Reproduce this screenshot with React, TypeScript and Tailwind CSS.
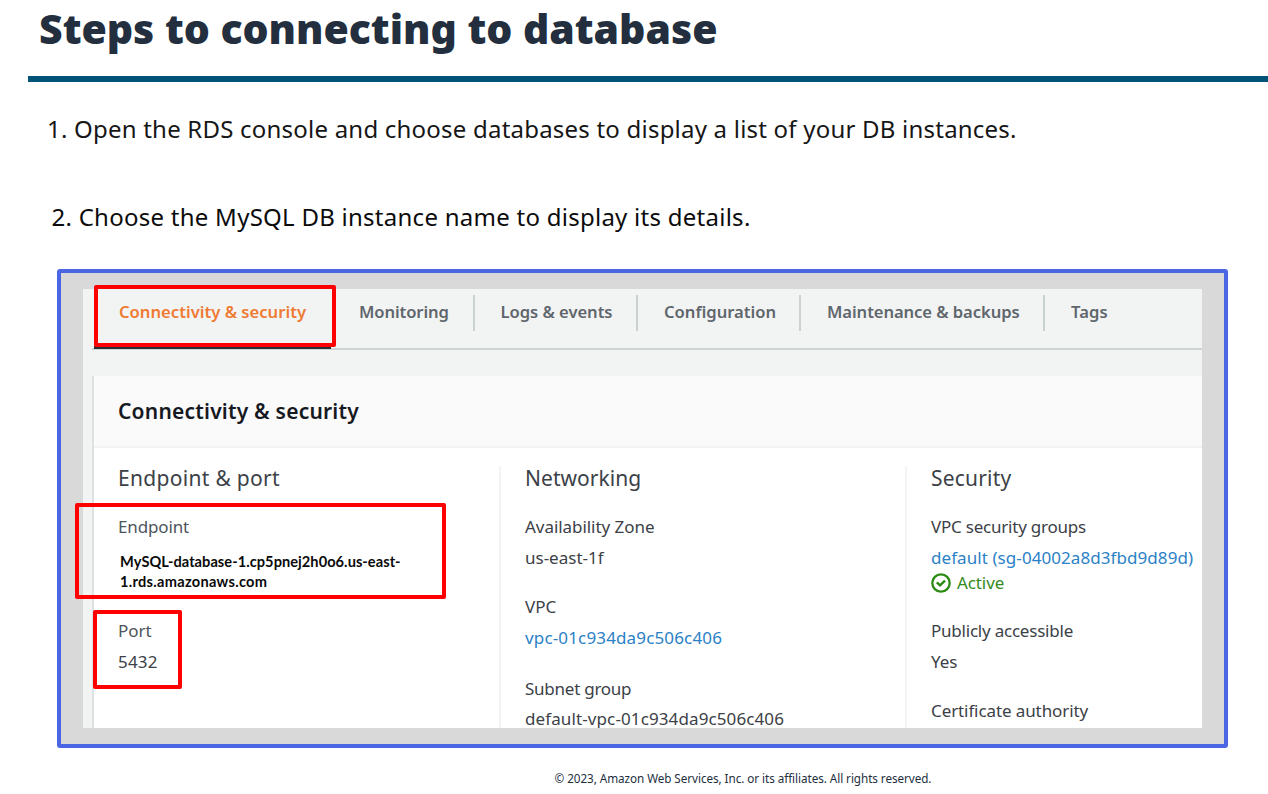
import React from "react";

const tabs = [
  { label: "Monitoring", box: "ml-[4px] w-[140px] pl-[24px] border-r-2", track: "tracking-[-0.1px]" },
  { label: "Logs & events", box: "w-[163px] pl-[25.5px] border-r-2", track: "tracking-[-0.04px]" },
  { label: "Configuration", box: "w-[163px] pl-[26px] border-r-2", track: "tracking-[0px]" },
  { label: "Maintenance & backups", box: "w-[244px] pl-[26px] border-r-2", track: "tracking-[-0.07px]" },
  { label: "Tags", box: "w-[100px] pl-[26px]", track: "tracking-[0.1px]" },
];

type LineProps = { className?: string; children: React.ReactNode };

function Line({ className = "", children }: LineProps) {
  return <p className={`h-6 text-[17px] leading-6 ${className}`}>{children}</p>;
}

function ColumnTitle({ className = "", children }: LineProps) {
  return <h3 className={`h-6 text-[21px] leading-6 ${className}`}>{children}</h3>;
}

function CheckCircle() {
  return (
    <svg className="h-5 w-5 shrink-0" viewBox="0 0 20 20" fill="none" stroke="#2a8a12" strokeWidth="2.3">
      <circle cx="10" cy="10" r="8.7" />
      <path d="M5.8 9.4l3.2 3 5-4.8" strokeWidth="2.4" />
    </svg>
  );
}

function Highlight({ className }: { className: string }) {
  return <div className={`pointer-events-none absolute rounded-[2px] border-4 border-[#ff0000] ${className}`} />;
}

export default function App() {
  return (
    <main className="h-[794px] w-[1268px] overflow-hidden whitespace-nowrap bg-white font-['Noto_Sans',sans-serif]">
      <header className="pl-7">
        <h1 className="h-[76px] pl-[11px] text-[41px] font-black leading-[56px] tracking-[-0.03px] text-[#232f3e]">
          Steps to connecting to database
        </h1>
        <div className="h-[5.5px] bg-[#005276]" />
      </header>

      <p className="mt-[30.5px] h-[34px] pl-[47px] text-[24px] leading-[34px] tracking-[0.215px] text-[#161616]">
        1. Open the RDS console and choose databases to display a list of your DB instances.
      </p>
      <p className="mt-[54px] h-[34px] pl-[51.5px] text-[24px] leading-[34px] tracking-[0.26px] text-[#0c0c0c]">
        2. Choose the MySQL DB instance name to display its details.
      </p>

      <section className="relative ml-[57px] mt-[35px] h-[479px] w-[1171px] rounded-[3px] border-4 border-[#4a66e3] bg-[#d9d9d9] pl-[22px] pt-4">
        <div className="flex h-[439px] w-[1119px] flex-col overflow-hidden bg-[#f2f4f4] pl-[9px]">
          <nav className="flex h-[61px] shrink-0 border-b-2 border-[#ccd5d4] pt-[6px] text-[16.6px] font-semibold text-[#5f666c]">
            <div className="ml-[2px] h-[54px] w-[237px] border-b-[3px] border-[#2a2e33] pl-[25px] leading-[33px] tracking-[0.02px] text-[#ef7a31]">
              Connectivity &amp; security
            </div>
            {tabs.map((t) => (
              <div key={t.label} className={`h-9 border-[#c9d1d1] leading-[33px] ${t.box} ${t.track}`}>
                {t.label}
              </div>
            ))}
          </nav>

          <div className="mt-[26px] flex-1 border-l-2 border-[#dce1e1] bg-white">
            <h2 className="h-[72px] border-b-2 border-[#f1f3f3] bg-[#fafafa] pl-6 text-[21px] font-semibold leading-[71px] tracking-[0.21px] text-[#16191f]">
              Connectivity &amp; security
            </h2>
            <div className="flex pt-[18px] font-[450] text-[#3c4147]">
              <div className="w-[405px] pl-6">
                <ColumnTitle className="tracking-[0.31px]">Endpoint &amp; port</ColumnTitle>
                <Line className="mt-[25px] tracking-[-0.15px] text-[#4d545c]">Endpoint</Line>
                <p className="mt-[13px] pl-[2px] font-['Lato',sans-serif] text-[14.6px] font-bold leading-[19.5px] tracking-[0.05px] text-[#0a0a0a]">
                  MySQL-database-1.cp5pnej2h0o6.us-east-
                  <br />
                  <span className="tracking-[0.28px]">1.rds.amazonaws.com</span>
                </p>
                <Line className="mt-[28px] text-[#4d545c]">Port</Line>
                <Line className="mt-[7px] tracking-[0.2px]">5432</Line>
              </div>
              <div className="h-[262px] w-[406px] border-l-2 border-[#f3f4f4] pl-6">
                <ColumnTitle className="tracking-[0.05px]">Networking</ColumnTitle>
                <Line className="mt-[25px] tracking-[-0.05px]">Availability Zone</Line>
                <Line className="mt-[7px]">us-east-1f</Line>
                <Line className="mt-[25px]">VPC</Line>
                <Line className="mt-[7px] tracking-[0.15px] text-[#2b81c6]">vpc-01c934da9c506c406</Line>
                <Line className="mt-[27px] tracking-[-0.25px]">Subnet group</Line>
                <Line className="mt-[6px] tracking-[0.11px]">default-vpc-01c934da9c506c406</Line>
              </div>
              <div className="h-[262px] w-[296px] border-l-2 border-[#f3f4f4] pl-6">
                <ColumnTitle className="tracking-[0.2px]">Security</ColumnTitle>
                <Line className="mt-[25px] tracking-[-0.22px]">VPC security groups</Line>
                <Line className="mt-[7px] tracking-[0.07px] text-[#2b81c6]">default (sg-04002a8d3fbd9d89d)</Line>
                <div className="flex h-6 gap-[6px] text-[#348b1e]">
                  <div className="pt-[3px]">
                    <CheckCircle />
                  </div>
                  <Line className="pt-px tracking-[-0.1px]">Active</Line>
                </div>
                <Line className="mt-[25px] tracking-[-0.22px]">Publicly accessible</Line>
                <Line className="mt-[7px]">Yes</Line>
                <Line className="mt-[25px] tracking-[-0.1px]">Certificate authority</Line>
              </div>
            </div>
          </div>
        </div>

        <Highlight className="left-[33px] top-[12px] h-[62px] w-[242px]" />
        <Highlight className="left-[14px] top-[230px] h-[96px] w-[371px]" />
        <Highlight className="left-[32px] top-[337px] h-[79px] w-[89px]" />
      </section>

      <footer className="mt-[21px] pl-[554.5px] text-[11.7px] leading-[18px] tracking-[-0.055px] text-[#232f3e]">
        © 2023, Amazon Web Services, Inc. or its affiliates. All rights reserved.
      </footer>
    </main>
  );
}
